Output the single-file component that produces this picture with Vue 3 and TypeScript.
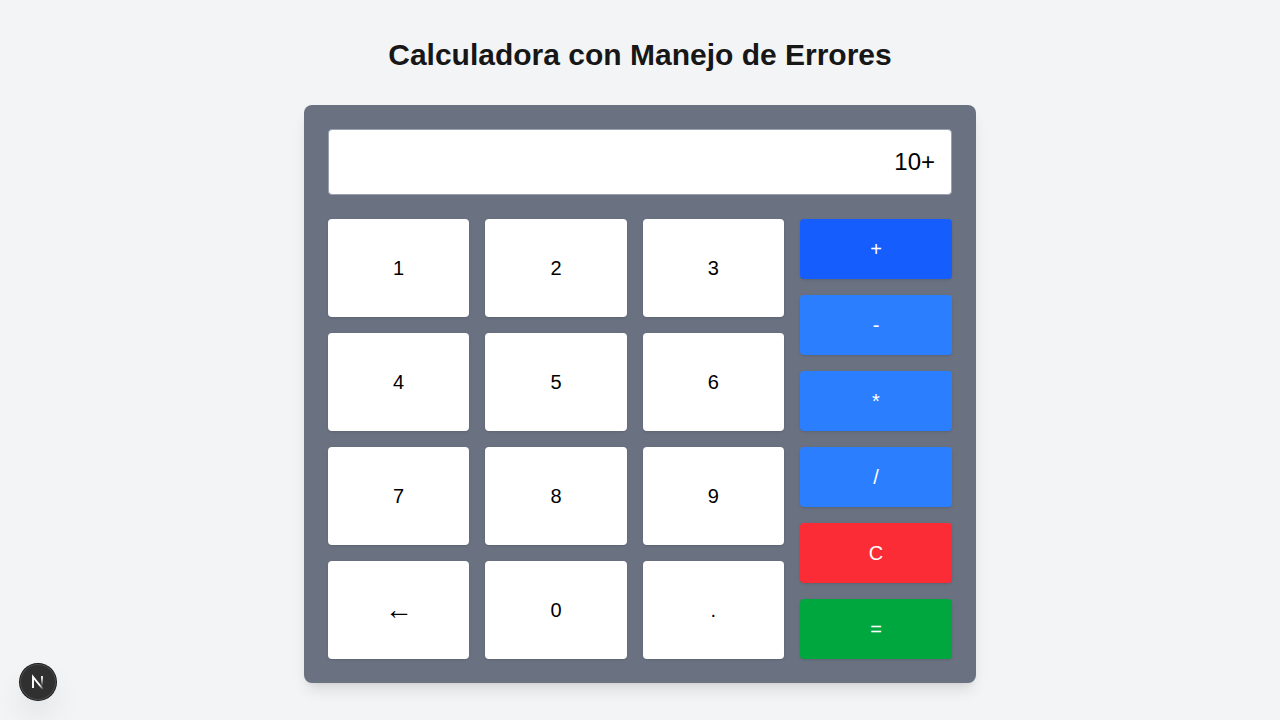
<script setup lang="ts">
import { ref } from 'vue'

interface Operation {
  symbol: string
  kind: 'operator' | 'clear' | 'equals'
  active?: boolean
}

const display = ref<string>('10+')

const keys: string[] = ['1', '2', '3', '4', '5', '6', '7', '8', '9', '←', '0', '.']

const operations: Operation[] = [
  { symbol: '+', kind: 'operator', active: true },
  { symbol: '-', kind: 'operator' },
  { symbol: '*', kind: 'operator' },
  { symbol: '/', kind: 'operator' },
  { symbol: 'C', kind: 'clear' },
  { symbol: '=', kind: 'equals' },
]

function evaluate(expression: string): string {
  const tokens = expression.match(/\d+(?:\.\d+)?|[-+*/]/g) ?? []
  const values: number[] = []
  let operator = '+'
  for (const token of tokens) {
    if (/^[-+*/]$/.test(token)) {
      operator = token
      continue
    }
    const value = Number(token)
    if (operator === '+') values.push(value)
    else if (operator === '-') values.push(-value)
    else {
      const previous = values.pop() ?? 0
      if (operator === '/' && value === 0) return 'Error'
      values.push(operator === '*' ? previous * value : previous / value)
    }
  }
  return /[-+*/]$/.test(expression) ? 'Error' : String(values.reduce((a, b) => a + b, 0))
}

function press(key: string): void {
  if (key === '←') display.value = display.value.slice(0, -1)
  else if (key === 'C') display.value = ''
  else if (key === '=') display.value = evaluate(display.value)
  else display.value += key
}
</script>

<template>
  <main class="page">
    <h1 class="title">Calculadora con Manejo de Errores</h1>
    <section class="calculator">
      <input class="display" type="text" aria-label="Pantalla" readonly :value="display" />
      <div class="controls">
        <div class="keypad">
          <button
            v-for="key in keys"
            :key="key"
            type="button"
            class="button key"
            :class="{ backspace: key === '←' }"
            @click="press(key)"
          >{{ key }}</button>
        </div>
        <div class="operations">
          <button
            v-for="op in operations"
            :key="op.symbol"
            type="button"
            class="button"
            :class="[op.kind, { active: op.active }]"
            @click="press(op.symbol)"
          >{{ op.symbol }}</button>
        </div>
      </div>
    </section>
    <button type="button" class="devtools" aria-label="Next.js Dev Tools">
      <svg width="36" height="36" viewBox="0 0 36 36" fill="none" aria-hidden="true">
        <defs>
          <linearGradient id="diagonal" x1="18" y1="18" x2="24" y2="25" gradientUnits="userSpaceOnUse">
            <stop offset="0.35" stop-color="#fff" />
            <stop offset="1" stop-color="#fff" stop-opacity="0" />
          </linearGradient>
          <linearGradient id="stem" x1="22" y1="12" x2="22" y2="22" gradientUnits="userSpaceOnUse">
            <stop offset="0.2" stop-color="#fff" stop-opacity="0.9" />
            <stop offset="1" stop-color="#fff" stop-opacity="0" />
          </linearGradient>
        </defs>
        <path d="M13 23.9V13L22.8 25" stroke="url(#diagonal)" stroke-width="1.9" />
        <path d="M22 12V22" stroke="url(#stem)" stroke-width="1.9" />
      </svg>
    </button>
  </main>
</template>

<style>
body {
  margin: 0;
}
</style>

<style scoped>
.page {
  box-sizing: border-box;
  min-height: 100vh;
  padding: 16px;
  display: flex;
  flex-direction: column;
  align-items: center;
  justify-content: center;
  background: #f3f4f6;
  color: #171717;
  font-family: "Liberation Sans", Arial, Helvetica, sans-serif;
}

.title {
  margin: 0 0 32px;
  font-size: 30px;
  line-height: 36px;
  font-weight: 700;
  text-align: center;
}

.calculator {
  box-sizing: border-box;
  width: 100%;
  max-width: 672px;
  padding: 24px;
  border-radius: 8px;
  background: #6a7282;
  box-shadow: 0 10px 15px -3px rgb(0 0 0 / 0.1), 0 4px 6px -4px rgb(0 0 0 / 0.1);
}

.display {
  box-sizing: border-box;
  display: block;
  width: 100%;
  margin: 0 0 24px;
  padding: 16px;
  height: 66px;
  border: 1px solid #99a1af;
  border-radius: 4px;
  outline: none;
  background: #fff;
  color: #000;
  font-family: inherit;
  font-size: 24px;
  line-height: 32px;
  text-align: right;
}

.controls {
  display: grid;
  grid-template-columns: 3fr 1fr;
  gap: 16px;
}

.keypad {
  display: grid;
  grid-template-columns: repeat(3, 1fr);
  grid-auto-rows: 1fr;
  gap: 16px;
}

.operations {
  display: flex;
  flex-direction: column;
  gap: 16px;
}

.button {
  margin: 0;
  padding: 16px;
  border: 0;
  border-radius: 4px;
  color: #fff;
  font-family: inherit;
  font-size: 20px;
  line-height: 28px;
  cursor: pointer;
  box-shadow: 0 1px 3px 0 rgb(0 0 0 / 0.1), 0 1px 2px -1px rgb(0 0 0 / 0.1);
}

.key {
  background: #fff;
  color: #000;
}

.backspace {
  font-size: 28px;
}

.operator {
  background: #2b7fff;
}

.operator.active,
.operator:hover {
  background: #155dfc;
}

.clear {
  background: #fb2c36;
}

.equals {
  background: #00a63e;
}

.devtools {
  position: fixed;
  left: 20px;
  bottom: 20px;
  width: 36px;
  height: 36px;
  padding: 0;
  border: 0;
  border-radius: 50%;
  background: #303030;
  box-shadow: 0 0 0 1px #171717, inset 0 0 0 1px #4b4b4b, 0 16px 32px -8px rgb(0 0 0 / 0.24);
  cursor: pointer;
}

.devtools svg {
  display: block;
}
</style>
